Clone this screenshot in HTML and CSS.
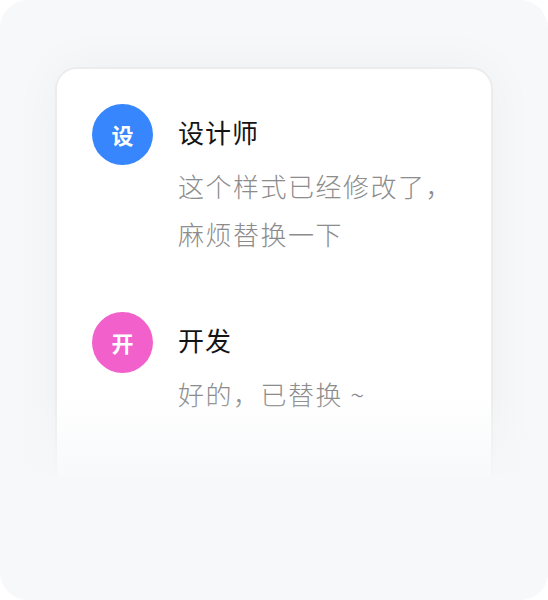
FILE: index.html
```html
<!DOCTYPE html>
<html lang="zh-CN">
<head>
<meta charset="utf-8">
<title>评论</title>
<link rel="stylesheet" href="styles.css">
</head>
<body>
<div class="frame">
  <div class="card">
    <div class="msg">
      <div class="avatar avatar-blue">设</div>
      <div class="body">
        <div class="name">设计师</div>
        <div class="text">这个样式已经修改了，<br>麻烦替换一下</div>
      </div>
    </div>
    <div class="msg">
      <div class="avatar avatar-pink">开</div>
      <div class="body">
        <div class="name">开发</div>
        <div class="text">好的，已替换 ~</div>
      </div>
    </div>
  </div>
  <div class="fade"></div>
</div>
</body>
</html>
```

FILE: styles.css
```css
* { box-sizing: border-box; }
html, body { margin: 0; background: #ffffff; }
body { font-family: "Noto Sans CJK SC", "Noto Sans", sans-serif; }

.frame {
  position: relative;
  width: 548px;
  height: 600px;
  border-radius: 28px;
  background: #f7f8fa;
  overflow: hidden;
  padding: 67px 55px 0 55px;
}

.card {
  background: #ffffff;
  border: 2px solid #ececee;
  border-radius: 22px;
  height: 480px;
  padding: 35px 35px 0 35px;
  box-shadow: 0 0 50px rgba(0, 0, 0, 0.045);
  display: flex;
  flex-direction: column;
  gap: 51px;
}

.msg {
  display: grid;
  grid-template-columns: 61px 1fr;
  column-gap: 25px;
}

.avatar {
  width: 61px;
  height: 61px;
  border-radius: 50%;
  color: #ffffff;
  font-size: 22px;
  font-weight: 700;
  display: flex;
  align-items: center;
  justify-content: center;
  padding-bottom: 2px;
}
.avatar-blue { background: #3886fd; }
.avatar-pink { background: #f260cb; }

.body { margin: -3px 0 3px 0; }

.name {
  height: 61px;
  line-height: 61px;
  font-size: 26px;
  letter-spacing: 1px;
  color: #141414;
}

.text {
  font-size: 26px;
  font-weight: 300;
  letter-spacing: 1.5px;
  line-height: 48px;
  color: #8c8c8c;
  white-space: nowrap;
}

.fade {
  position: absolute;
  left: 0;
  right: 0;
  top: 395px;
  bottom: 0;
  background: linear-gradient(to bottom,
    rgba(247, 248, 250, 0) 0,
    rgba(247, 248, 250, 0.85) 80px,
    #f7f8fa 81px);
}
```
